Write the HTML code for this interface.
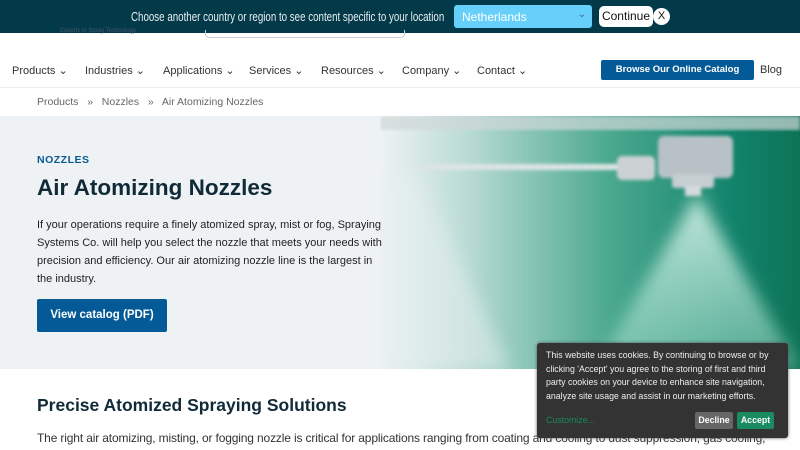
<!DOCTYPE html><html><head><style>
*{margin:0;padding:0;box-sizing:border-box}
body{width:800px;height:450px;overflow:hidden;font-family:"Liberation Sans",sans-serif;background:#fff;position:relative;color:#222}
.top{position:absolute;left:0;top:0;width:800px;height:33px;background:#033a4a;color:#e8eef0;font-size:12.5px}
.top span{position:absolute;left:131px;top:10px;transform:scaleX(.78);transform-origin:0 0;white-space:nowrap}
.sel{position:absolute;left:454px;top:5px;width:138px;height:23px;background:#66d0fa;border-radius:3px;color:#fff;font-size:12px;padding:5px 8px}
.sel i{position:absolute;right:6px;top:4px;font-style:normal;font-size:10px;color:#557}
.cont{position:absolute;left:599px;top:6px;width:54px;height:21px;background:#fff;border-radius:5px;color:#111;font-size:12px;text-align:center;line-height:21px}
.x{position:absolute;left:653px;top:8px;width:17px;height:17px;background:#fff;border-radius:50%;color:#111;font-size:11px;text-align:center;line-height:17px}
.nav{position:absolute;top:64px;font-size:11px;color:#333}
.cat{position:absolute;left:601px;top:60px;width:153px;height:20px;background:#045a96;border-radius:2px;color:#fff;font-size:9.5px;font-weight:bold;text-align:center;line-height:20px}
.bc{position:absolute;top:96px;font-size:10.5px;color:#666}
.hero{position:absolute;left:0;top:116px;width:800px;height:253px;background:#eef2f4}
.img{position:absolute;left:380px;top:0;width:420px;height:253px;overflow:hidden;background:linear-gradient(90deg,#eef2f4 0%,#bcdcd6 20%,#4aa88f 55%,#11826a 85%,#0e7356 100%)}
.spray{position:absolute;left:0;top:0;width:420px;height:253px}
h1{position:absolute;left:37px;top:175px;font-size:22.5px;color:#102a38}
.lbl{position:absolute;left:37px;top:154px;font-size:10.5px;font-weight:bold;color:#0a5a90;letter-spacing:.5px}
.p{position:absolute;left:37px;top:216px;width:345px;font-size:11px;line-height:18px;color:#222}
.btn{position:absolute;left:37px;top:299px;width:130px;height:33px;background:#045a96;color:#fff;font-size:11.5px;font-weight:bold;text-align:center;line-height:33px;border-radius:2px}
h2{position:absolute;left:37px;top:395px;font-size:17.5px;color:#102a38}
.p2{position:absolute;left:37px;top:431px;font-size:12px;color:#333;white-space:nowrap;letter-spacing:-.15px}
.ck{position:absolute;left:537px;top:343px;width:251px;height:95px;background:#333;border-radius:3px;color:#eee;font-size:8.8px;line-height:13.5px;padding:6px 9px;box-shadow:0 0 3px #555}
.cu{position:absolute;left:9px;top:71px;color:#1a8a5a}
.de{position:absolute;left:158px;top:69px;width:38px;height:17px;background:#666;color:#fff;font-weight:bold;text-align:center;line-height:17px;border-radius:2px}
.ac{position:absolute;left:200px;top:69px;width:37px;height:17px;background:#1a8a60;color:#fff;font-weight:bold;text-align:center;line-height:17px;border-radius:2px}
</style></head><body>
<div class="top"><span>Choose another country or region to see content specific to your location</span><div class="sel">Netherlands<i>⌄</i></div><div class="cont">Continue</div><div class="x">X</div></div>
<div style="position:absolute;left:60px;top:28px;font-size:6px;color:#456">Experts in Spray Technology</div>
<div style="position:absolute;left:205px;top:30px;width:200px;height:8px;border:1px solid #ccc;border-top:none;border-radius:0 0 4px 4px"></div>
<div class="nav" style="left:12px">Products ⌄</div><div class="nav" style="left:85px">Industries ⌄</div><div class="nav" style="left:163px">Applications ⌄</div><div class="nav" style="left:249px">Services ⌄</div><div class="nav" style="left:321px">Resources ⌄</div><div class="nav" style="left:402px">Company ⌄</div><div class="nav" style="left:477px">Contact ⌄</div>
<div class="cat">Browse Our Online Catalog</div><div class="nav" style="left:760px">Blog</div>
<div style="position:absolute;left:0;top:87px;width:800px;height:1px;background:#eee"></div>
<div class="bc" style="left:37px">Products &nbsp;&nbsp;»&nbsp;&nbsp; Nozzles &nbsp;&nbsp;»&nbsp;&nbsp; Air Atomizing Nozzles</div>
<div class="hero"><div class="img"><svg class="spray" viewBox="0 0 420 253"><defs><linearGradient id="g" x1="0" y1="0" x2="0" y2="1"><stop offset="0" stop-color="#d8f2ea" stop-opacity=".9"/><stop offset="1" stop-color="#a8e0cc" stop-opacity=".45"/></linearGradient><filter id="b"><feGaussianBlur stdDeviation="8"/></filter><filter id="s"><feGaussianBlur stdDeviation="1.5"/></filter></defs><polygon points="317,78 215,253 420,253" fill="url(#g)" filter="url(#b)"/><polygon points="0,60 40,60 130,253 0,253" fill="#e6eff0" opacity=".5" filter="url(#b)"/><rect x="0" y="0" width="420" height="14" fill="#d0d8d8" opacity=".7" filter="url(#s)"/><g filter="url(#s)"><rect x="40" y="48" width="200" height="6" fill="#dde4e4"/><rect x="278" y="20" width="75" height="42" rx="6" fill="#b8c2c6"/><rect x="292" y="58" width="42" height="14" rx="3" fill="#c6ced2"/><rect x="305" y="70" width="16" height="10" fill="#d6dcde"/><rect x="237" y="40" width="38" height="24" rx="5" fill="#ccd2d4"/></g></svg></div></div>
<div class="lbl">NOZZLES</div>
<h1>Air Atomizing Nozzles</h1>
<div class="p">If your operations require a finely atomized spray, mist or fog, Spraying Systems Co. will help you select the nozzle that meets your needs with precision and efficiency. Our air atomizing nozzle line is the largest in the industry.</div>
<div class="btn">View catalog (PDF)</div>
<h2>Precise Atomized Spraying Solutions</h2>
<div class="p2">The right air atomizing, misting, or fogging nozzle is critical for applications ranging from coating and cooling to dust suppression, gas cooling,</div>
<div class="ck">This website uses cookies. By continuing to browse or by clicking 'Accept' you agree to the storing of first and third party cookies on your device to enhance site navigation, analyze site usage and assist in our marketing efforts.<div class="cu">Customize...</div><div class="de">Decline</div><div class="ac">Accept</div></div>
</body></html>
